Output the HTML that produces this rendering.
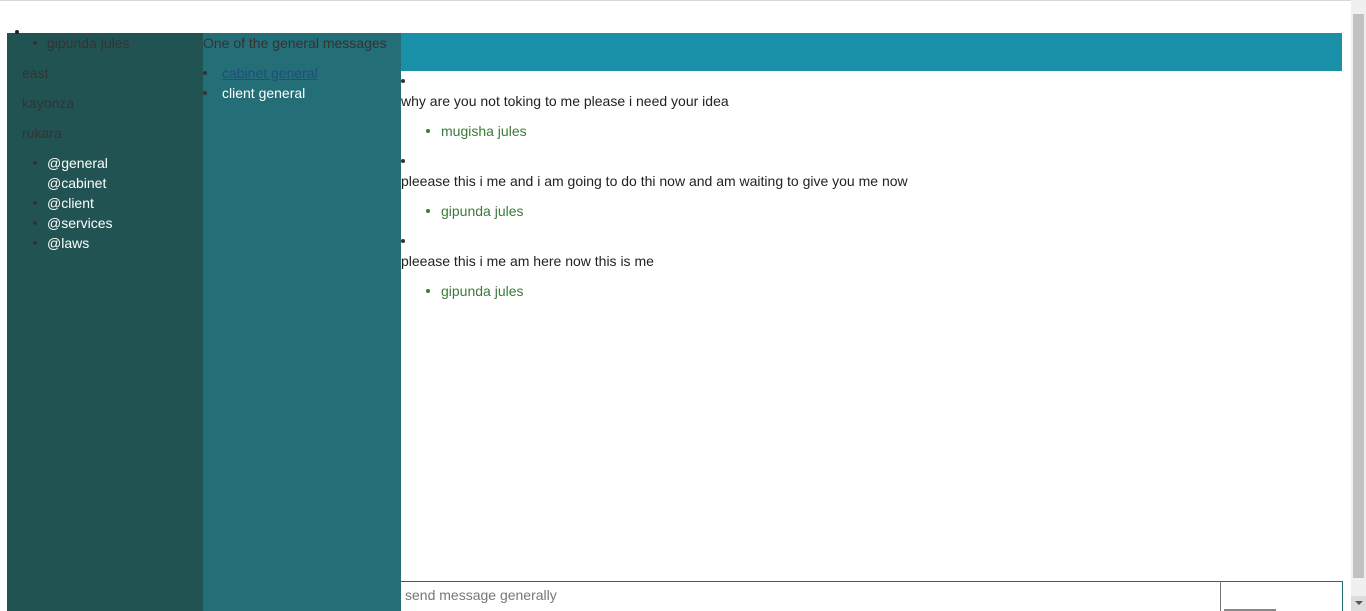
<html><head><style>
body{margin:0;width:1366px;height:611px;overflow:hidden;background:#fff;font-family:"Liberation Sans",sans-serif;font-size:14px;position:relative}
.a{position:absolute;white-space:nowrap}
.d{position:absolute;width:4px;height:4px;border-radius:2px}
</style></head><body>
<div class="a" style="left:0;top:0;width:1351px;height:1px;background:#d8d8d8"></div>
<div class="a" style="left:7px;top:33px;width:196px;height:578px;background:#225353"></div>
<div class="a" style="left:203px;top:33px;width:198px;height:578px;background:#246e78"></div>
<div class="a" style="left:401px;top:33px;width:941px;height:38px;background:#1a8fa8"></div>
<div class="d" style="left:15px;top:30px;background:#222"></div>
<div class="d" style="left:33px;top:41px;background:#333"></div>
<div class="a" style="left:47px;top:35px;color:#333">gipunda jules</div>
<div class="a" style="left:22px;top:65px;color:#333">east</div>
<div class="a" style="left:22px;top:95px;color:#333">kayonza</div>
<div class="a" style="left:22px;top:125px;color:#333">rukara</div>
<div class="d" style="left:33px;top:161px;background:#333"></div>
<div class="d" style="left:33px;top:201px;background:#333"></div>
<div class="d" style="left:33px;top:221px;background:#333"></div>
<div class="d" style="left:33px;top:241px;background:#333"></div>
<div class="a" style="left:47px;top:153px;color:#fff;line-height:20px">@general<br>@cabinet<br>@client<br>@services<br>@laws</div>
<div class="a" style="left:203px;top:35px;color:#333">One of the general messages</div>
<div class="d" style="left:203px;top:71px;background:#333"></div>
<div class="d" style="left:203px;top:91px;background:#333"></div>
<div class="a" style="left:222px;top:65px;color:#1f4f7a;text-decoration:underline">cabinet general</div>
<div class="a" style="left:222px;top:85px;color:#fff">client general</div>
<div class="d" style="left:401px;top:79px;background:#333"></div>
<div class="a" style="left:401px;top:93px;color:#222">why are you not toking to me please i need your idea</div>
<div class="d" style="left:426px;top:129px;background:#3a7a3a"></div>
<div class="a" style="left:441px;top:123px;color:#3a7a3a">mugisha jules</div>
<div class="d" style="left:401px;top:159px;background:#333"></div>
<div class="a" style="left:401px;top:173px;color:#222">pleease this i me and i am going to do thi now and am waiting to give you me now</div>
<div class="d" style="left:426px;top:209px;background:#3a7a3a"></div>
<div class="a" style="left:441px;top:203px;color:#3a7a3a">gipunda jules</div>
<div class="d" style="left:401px;top:239px;background:#333"></div>
<div class="a" style="left:401px;top:253px;color:#222">pleease this i me am here now this is me</div>
<div class="d" style="left:426px;top:289px;background:#3a7a3a"></div>
<div class="a" style="left:441px;top:283px;color:#3a7a3a">gipunda jules</div>
<div class="a" style="left:401px;top:581px;width:820px;height:30px;border-top:1px solid #555;border-right:1px solid #777;box-sizing:border-box"></div>
<div class="a" style="left:405px;top:587px;color:#777">send message generally</div>
<div class="a" style="left:1221px;top:581px;width:122px;height:30px;border-top:1px solid #1f6e6e;border-right:1px solid #1f6e6e;box-sizing:border-box"></div>
<div class="a" style="left:1224px;top:609px;width:52px;height:2px;background:#888"></div>
<div class="a" style="left:1351px;top:0;width:15px;height:611px;background:#f0f0f0"></div>
<div class="a" style="left:1353px;top:14px;width:11px;height:564px;background:#c1c1c1"></div>
<div class="a" style="left:1351px;top:596px;width:15px;height:15px;background:#ddd"></div>
<div class="a" style="left:1355px;top:601px;width:0;height:0;border-left:4px solid transparent;border-right:4px solid transparent;border-top:4px solid #555"></div>
</body></html>
